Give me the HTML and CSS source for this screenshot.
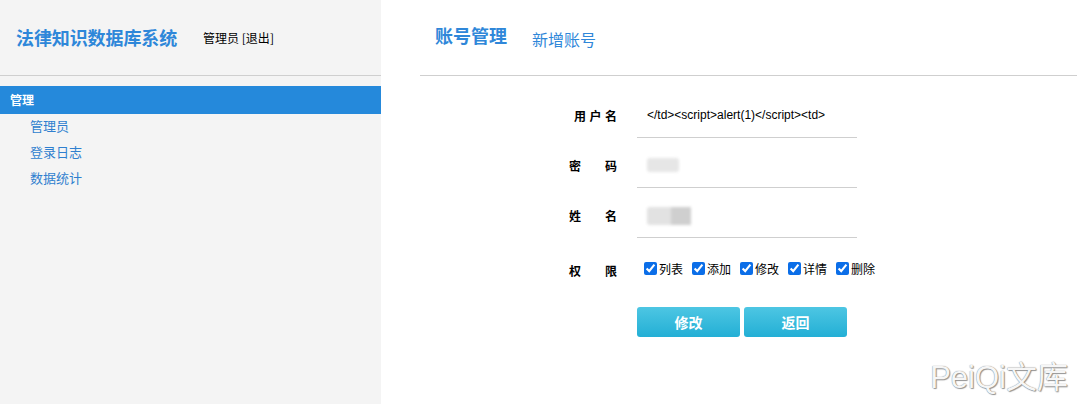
FILE: index.html
```html
<!DOCTYPE html>
<html lang="zh">
<head>
<meta charset="utf-8">
<title>法律知识数据库系统</title>
<link rel="stylesheet" href="styles.css">
</head>
<body>
<div class="page">
  <aside class="sidebar">
    <div class="side-head">
      <span class="logo">法律知识数据库系统</span>
      <span class="user">管理员 [<a class="logout">退出</a>]</span>
    </div>
    <div class="nav-title">管理</div>
    <ul class="nav">
      <li>管理员</li>
      <li>登录日志</li>
      <li>数据统计</li>
    </ul>
  </aside>
  <main class="main">
    <div class="tabs">
      <span class="tab active">账号管理</span>
      <span class="tab">新增账号</span>
    </div>
    <div class="form">
      <div class="row">
        <span class="label l3"><span>用</span><span>户</span><span>名</span></span>
        <span class="value lined">&lt;/td&gt;&lt;script&gt;alert(1)&lt;/script&gt;&lt;td&gt;</span>
      </div>
      <div class="row">
        <span class="label"><span>密</span><span>码</span></span>
        <span class="value lined"><span class="blur b1"></span></span>
      </div>
      <div class="row">
        <span class="label"><span>姓</span><span>名</span></span>
        <span class="value lined"><span class="blur b2"><span class="blur-dark"></span></span></span>
      </div>
      <div class="row perm">
        <span class="label"><span>权</span><span>限</span></span>
        <span class="value checks">
          <label><input type="checkbox" checked>列表</label>
          <label><input type="checkbox" checked>添加</label>
          <label><input type="checkbox" checked>修改</label>
          <label><input type="checkbox" checked>详情</label>
          <label><input type="checkbox" checked>删除</label>
        </span>
      </div>
      <div class="buttons">
        <button class="btn">修改</button>
        <button class="btn">返回</button>
      </div>
    </div>
    <div class="watermark">PeiQi文库</div>
  </main>
</div>
</body>
</html>
```
FILE: styles.css
```css
* { box-sizing: border-box; }
html, body { margin: 0; padding: 0; }
body {
  font-family: "Microsoft YaHei", "Noto Sans CJK SC", "Liberation Sans", sans-serif;
  background: #fff;
  width: 1077px;
  height: 404px;
  overflow: hidden;
}
.page { display: flex; height: 404px; }
.sidebar {
  width: 381px;
  background: #f4f4f4;
  flex-shrink: 0;
}
.side-head {
  height: 76px;
  border-bottom: 1px solid #cfcfcf;
  display: flex;
  align-items: center;
  padding-left: 16px;
  padding-bottom: 1px;
}
.logo {
  font-size: 18px;
  font-weight: bold;
  color: #2e87d9;
  letter-spacing: -0.1px;
}
.user {
  margin-left: 26px;
  font-size: 12px;
  color: #000;
}
.nav-title {
  margin-top: 10px;
  height: 28px;
  line-height: 28px;
  background: #2589db;
  color: #fff;
  font-weight: bold;
  font-size: 12px;
  padding-left: 10px;
}
.nav {
  list-style: none;
  margin: 0;
  padding: 0 0 0 30px;
}
.nav li {
  height: 26px;
  line-height: 24px;
  font-size: 13px;
  color: #2f7fcf;
}
.main {
  flex: 1;
  position: relative;
  padding-left: 39px;
}
.tabs {
  height: 76px;
  border-bottom: 1px solid #cfcfcf;
  display: flex;
  align-items: center;
  padding-left: 15px;
  padding-bottom: 2px;
}
.tab {
  font-size: 16px;
  color: #2f87d9;
  margin-top: 4px;
}
.tab.active {
  font-size: 18px;
  font-weight: bold;
  margin-right: 25px;
  margin-top: -4px;
}
.form {
  padding-left: 149px;
  padding-top: 12px;
}
.row {
  display: flex;
  height: 50px;
}
.label {
  width: 48px;
  font-size: 12px;
  font-weight: bold;
  color: #000;
  display: flex;
  justify-content: space-between;
  padding-top: 19px;
}
.label.l3 { padding-left: 5px; }
.value {
  margin-left: 20px;
  width: 220px;
  font-size: 12px;
  font-family: "Liberation Sans", Arial, sans-serif;
  padding-left: 10px;
  padding-top: 20px;
  color: #000;
}
.lined { border-bottom: 1px solid #cfcfcf; }
.blur {
  display: block;
  background: #e6e6e6;
  filter: blur(1.5px);
  border-radius: 3px;
}
.b1 { width: 32px; height: 14px; margin-top: 0; }
.b2 { width: 44px; height: 18px; margin-top: -1px; background: #e2e2e2; display: flex; justify-content: flex-end; }
.blur-dark { display: block; width: 20px; height: 18px; background: #cfcfcf; }
.perm .label { padding-top: 24px; }
.checks {
  display: flex;
  padding-left: 7px;
  padding-top: 23px;
  font-family: "Microsoft YaHei", "Noto Sans CJK SC", sans-serif;
  font-size: 12px;
  width: 260px;
}
.checks label {
  display: flex;
  align-items: center;
  height: 14px;
  width: 48px;
  flex-shrink: 0;
}
.checks input {
  width: 13px;
  height: 13px;
  margin: 0 2px 0 0;
  accent-color: #0b6ee8;
}
.buttons {
  display: flex;
  gap: 4px;
  margin-left: 68px;
  margin-top: 19px;
}
.btn {
  width: 103px;
  height: 30px;
  border: none;
  border-radius: 3px;
  background: linear-gradient(#4dc6e3, #23afd5);
  color: #fff;
  font-weight: bold;
  font-size: 14px;
  font-family: "Microsoft YaHei", "Noto Sans CJK SC", sans-serif;
  padding: 0;
}
.watermark {
  position: absolute;
  right: 9px;
  bottom: 9px;
  font-size: 31px;
  line-height: 34px;
  color: #f6f6f6;
  font-family: "Liberation Sans", "Noto Sans CJK SC", sans-serif;
  text-shadow: 0 0 1px #666, 1px 1px 1px #999;
}
```
